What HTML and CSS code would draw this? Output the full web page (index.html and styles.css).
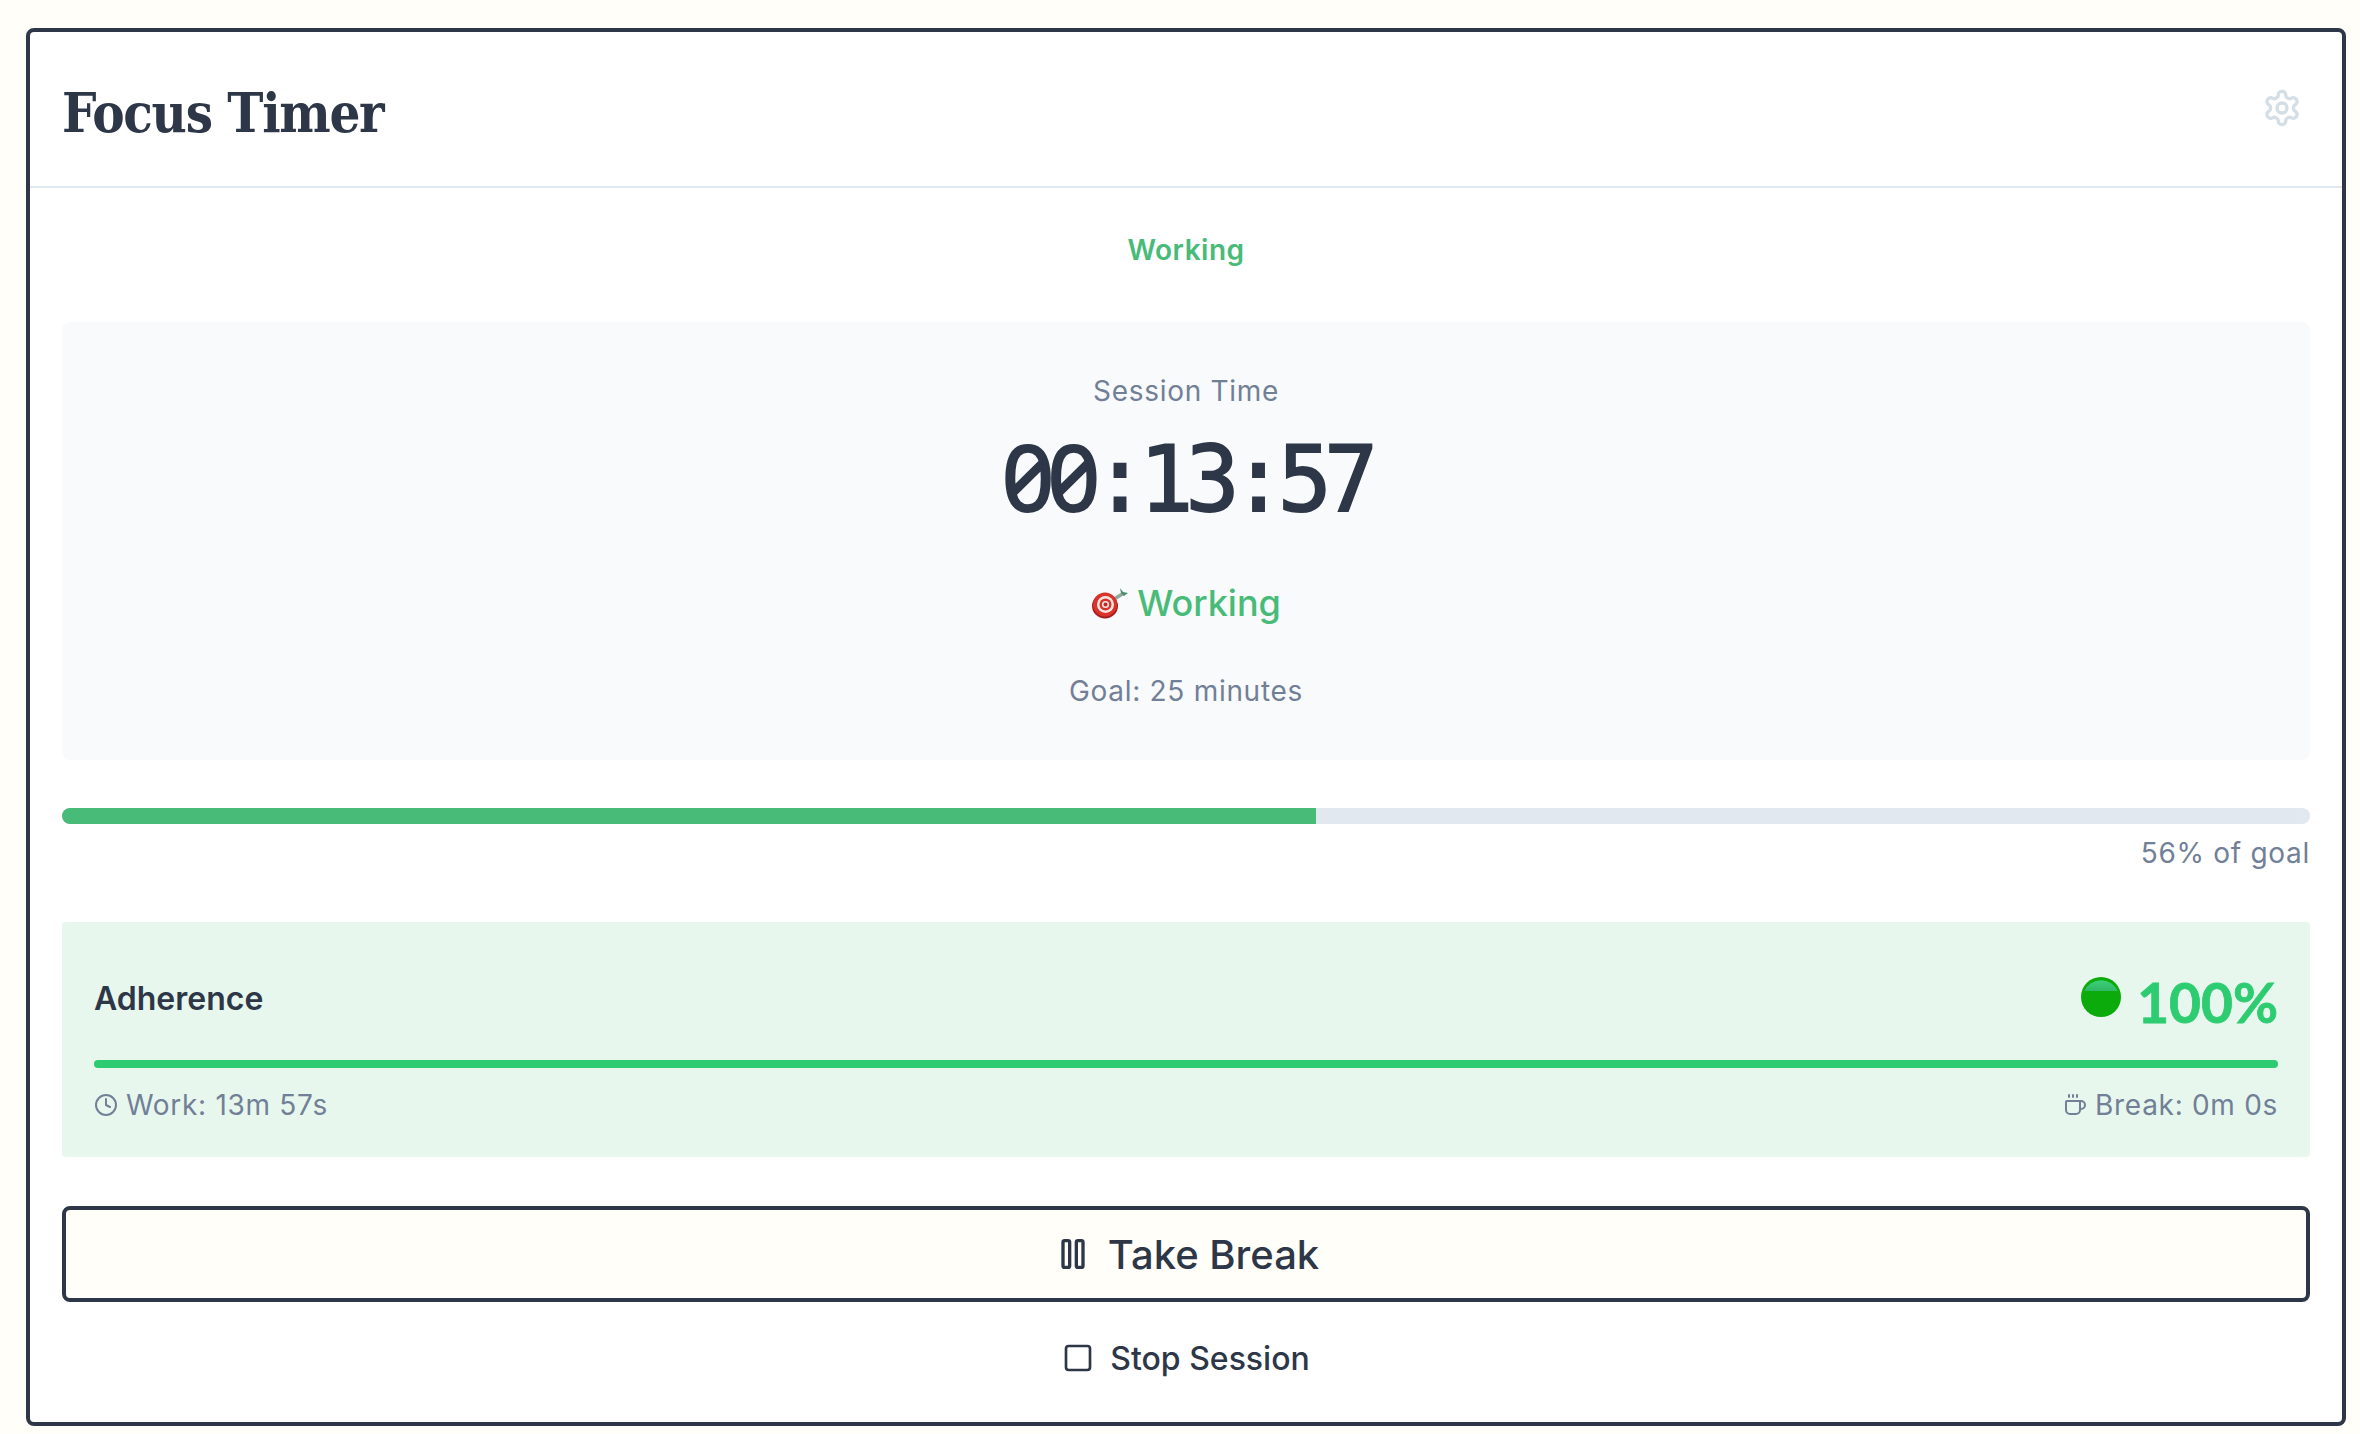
FILE: index.html
```html
<!DOCTYPE html>
<html lang="en">
<head>
  <meta charset="UTF-8">
  <meta name="viewport" content="width=device-width, initial-scale=1.0">
  <title>Focus Timer</title>
  <link rel="stylesheet" href="styles.css">
</head>
<body>
  <div class="card">
    <header class="card-header">
      <h1 class="title">Focus Timer</h1>
      <button class="settings-btn" aria-label="Settings">
        <svg width="40" height="40" viewBox="0 0 24 24" fill="none" stroke="currentColor" stroke-width="2" stroke-linecap="round" stroke-linejoin="round"><path d="M12.22 2h-.44a2 2 0 0 0-2 2v.18a2 2 0 0 1-1 1.73l-.43.25a2 2 0 0 1-2 0l-.15-.08a2 2 0 0 0-2.73.73l-.22.38a2 2 0 0 0 .73 2.73l.15.1a2 2 0 0 1 1 1.72v.51a2 2 0 0 1-1 1.74l-.15.09a2 2 0 0 0-.73 2.73l.22.38a2 2 0 0 0 2.73.73l.15-.08a2 2 0 0 1 2 0l.43.25a2 2 0 0 1 1 1.73V20a2 2 0 0 0 2 2h.44a2 2 0 0 0 2-2v-.18a2 2 0 0 1 1-1.73l.43-.25a2 2 0 0 1 2 0l.15.08a2 2 0 0 0 2.73-.73l.22-.39a2 2 0 0 0-.73-2.73l-.15-.08a2 2 0 0 1-1-1.74v-.5a2 2 0 0 1 1-1.74l.15-.09a2 2 0 0 0 .73-2.73l-.22-.38a2 2 0 0 0-2.73-.73l-.15.08a2 2 0 0 1-2 0l-.43-.25a2 2 0 0 1-1-1.73V4a2 2 0 0 0-2-2z"/><circle cx="12" cy="12" r="3"/></svg>
      </button>
    </header>

    <main class="card-body">
      <div class="status-label">Working</div>

      <section class="session-panel">
        <div class="session-caption">Session Time</div>
        <div class="session-clock"><span class="zero">0</span><span class="zero">0</span>:13:57</div>
        <div class="session-state">
          <svg class="dart-icon" width="38" height="32" viewBox="0 0 38 32">
            <path d="M20 14 L33 6" stroke="#8fa89c" stroke-width="3.5"/>
            <path d="M29 1 L32 5 L37 6 L33 9 L30 6 Z" fill="#4f8a70"/>
            <ellipse cx="14" cy="19" rx="13" ry="12.5" fill="#a81c1c"/>
            <circle cx="14" cy="17.5" r="12" fill="#d8342c"/>
            <circle cx="14.5" cy="17.5" r="8.5" fill="#f4e6e0"/>
            <circle cx="14.5" cy="17.5" r="6" fill="#d8342c"/>
            <circle cx="14.5" cy="17.5" r="3.6" fill="#f4e6e0"/>
            <circle cx="14.5" cy="17.5" r="2" fill="#c02a24"/>
          </svg>
          <span>Working</span>
        </div>
        <div class="session-goal">Goal: 25 minutes</div>
      </section>

      <div class="goal-track"><div class="goal-fill" style="width: 55.8%"></div></div>
      <div class="goal-text">56% of goal</div>

      <section class="adherence">
        <div class="adherence-head">
          <span class="adherence-label">Adherence</span>
          <span class="adherence-score">
            <svg class="score-dot" width="40" height="40" viewBox="0 0 40 40">
              <defs>
                <linearGradient id="dotShine" x1="0" y1="0" x2="0" y2="1">
                  <stop offset="0" stop-color="#3ecf78"/>
                  <stop offset="1" stop-color="#2fb765"/>
                </linearGradient>
              </defs>
              <circle cx="20" cy="20" r="20" fill="#0aab0a"/>
              <path d="M3.2 14 A18.5 18.5 0 0 1 36.8 14 Z" fill="url(#dotShine)"/>
            </svg>
            <span class="score-value">100%</span>
          </span>
        </div>
        <div class="adherence-track"></div>
        <div class="adherence-meta">
          <span class="meta-item">
            <svg width="24" height="24" viewBox="0 0 24 24" fill="none" stroke="currentColor" stroke-width="2" stroke-linecap="round" stroke-linejoin="round"><circle cx="12" cy="12" r="10"/><polyline points="12 6 12 12 16 14"/></svg>
            Work: 13m 57s
          </span>
          <span class="meta-item">
            <svg width="24" height="24" viewBox="0 0 24 24" fill="none" stroke="currentColor" stroke-width="2" stroke-linecap="round" stroke-linejoin="round"><path d="M10 2v2"/><path d="M14 2v2"/><path d="M16 8a1 1 0 0 1 1 1v8a4 4 0 0 1-4 4H7a4 4 0 0 1-4-4V9a1 1 0 0 1 1-1h14a4 4 0 1 1 0 8h-1"/><path d="M6 2v2"/></svg>
            Break: 0m 0s
          </span>
        </div>
      </section>

      <button class="btn-break">
        <svg width="40" height="40" viewBox="0 0 24 24" fill="none" stroke="currentColor" stroke-width="2" stroke-linecap="round" stroke-linejoin="round"><rect x="14" y="4" width="4" height="16" rx="1"/><rect x="6" y="4" width="4" height="16" rx="1"/></svg>
        Take Break
      </button>
      <button class="btn-stop">
        <svg width="32" height="32" viewBox="0 0 24 24" fill="none" stroke="currentColor" stroke-width="2" stroke-linecap="round" stroke-linejoin="round"><rect x="3" y="3" width="18" height="18" rx="2"/></svg>
        Stop Session
      </button>
    </main>
  </div>
</body>
</html>
```

FILE: styles.css
```css
* {
  box-sizing: border-box;
}

body {
  margin: 0;
  padding: 28px 14px 8px 26px;
  background-color: #fffef9;
  color: #2d3748;
  font-family: Inter, "Noto Sans", sans-serif;
  font-size: 28px;
}

.card {
  background-color: #fff;
  border: 4px solid #2d3748;
  border-radius: 8px;
}

.card-header {
  display: flex;
  justify-content: space-between;
  align-items: center;
  height: 156px;
  padding: 0 32px;
  border-bottom: 2px solid #e2e8f0;
}

.title {
  margin: 8px 0 0;
  font-family: "DejaVu Serif Condensed", "DejaVu Serif", serif;
  font-size: 54px;
  font-weight: 700;
  letter-spacing: -1.3px;
}

.settings-btn {
  display: flex;
  margin: 0 0 2px;
  padding: 8px;
  border: none;
  background: none;
  color: #d3dee6;
}

.card-body {
  padding: 40px 32px 32px;
}

.status-label {
  margin-bottom: 50px;
  color: #48bb78;
  font-weight: 600;
  letter-spacing: 0.5px;
  line-height: 44px;
  text-align: center;
}

.session-panel {
  padding: 48px 0;
  background-color: #f9fafc;
  border-radius: 8px;
  text-align: center;
}

.session-caption,
.session-goal,
.goal-text {
  color: #718096;
  letter-spacing: 0.7px;
  line-height: 42px;
}

.session-clock {
  margin-top: 18px;
  font-family: "DejaVu Sans Mono", monospace;
  font-size: 90px;
  letter-spacing: -8px;
  line-height: 100px;
  -webkit-text-stroke: 1.8px #2d3748;
}

.session-clock .zero {
  font-family: "Noto Sans", sans-serif;
  font-size: 92px;
  font-feature-settings: "zero";
  letter-spacing: -7px;
  line-height: 0;
}

.session-state {
  display: flex;
  justify-content: center;
  align-items: center;
  gap: 8px;
  margin-top: 46px;
  color: #48bb78;
  font-size: 36px;
  font-weight: 500;
  line-height: 54px;
}

.session-goal {
  margin-top: 40px;
}

.goal-track {
  height: 16px;
  margin-top: 48px;
  background-color: #e2e8f0;
  border-radius: 8px;
  overflow: hidden;
}

.goal-fill {
  height: 100%;
  background-color: #48bb78;
}

.goal-text {
  margin-top: 8px;
  text-align: right;
}

.adherence {
  margin-top: 48px;
  padding: 32px 32px 31px;
  background-color: #e8f7ee;
  border-radius: 4px;
}

.adherence-head {
  display: flex;
  justify-content: space-between;
  align-items: center;
  height: 92px;
}

.adherence-label {
  margin-bottom: 3px;
  font-size: 32px;
  font-weight: 600;
}

.adherence-score {
  display: flex;
  align-items: center;
  gap: 16px;
}

.score-dot {
  margin-bottom: 6px;
}

.score-value {
  padding-top: 4px;
  color: #2ecc71;
  font-family: Lato, sans-serif;
  font-size: 55px;
  font-weight: 700;
  -webkit-text-stroke: 0.8px #2ecc71;
}

.adherence-track {
  height: 8px;
  margin-top: 14px;
  background-color: #2ecc71;
  border-radius: 4px;
}

.adherence-meta {
  display: flex;
  justify-content: space-between;
  margin-top: 16px;
  color: #718096;
  letter-spacing: 0.7px;
  line-height: 42px;
}

.meta-item {
  display: flex;
  align-items: center;
  gap: 8px;
}

.btn-break,
.btn-stop {
  display: flex;
  justify-content: center;
  align-items: center;
  width: 100%;
  color: #2d3748;
  font-family: inherit;
  font-weight: 500;
}

.btn-break {
  gap: 15px;
  height: 96px;
  margin-top: 49px;
  background-color: #fffef9;
  border: 4px solid #2d3748;
  border-radius: 8px;
  font-size: 40px;
}

.btn-stop {
  gap: 16px;
  height: 64px;
  margin-top: 24px;
  background: none;
  border: none;
  font-size: 32px;
}
```
